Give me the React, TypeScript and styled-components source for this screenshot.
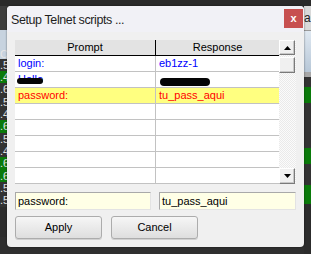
import styled, { createGlobalStyle } from 'styled-components';

const GlobalStyle = createGlobalStyle`
  html, body {
    margin: 0;
    padding: 0;
    background: #2d2d2d;
  }
  * {
    box-sizing: border-box;
  }
`;

const Desktop = styled.div`
  position: relative;
  width: 311px;
  height: 254px;
  overflow: hidden;
  display: flex;
  flex-direction: column;
  background: #2f2f2f;
  font-family: 'Liberation Sans', Arial, sans-serif;
`;

const TopBar = styled.div`
  height: 6px;
  flex-shrink: 0;
  background: #2a2a2a;
`;

const BackRow = styled.div`
  flex: 1;
  display: flex;
  justify-content: space-between;
`;

const Strip = styled.div<{ $width: number }>`
  width: ${({ $width }) => $width}px;
  display: flex;
  flex-direction: column;
  overflow: hidden;
`;

const Band = styled.div<{ $h: number; $bg: string }>`
  height: ${({ $h }) => $h}px;
  flex-shrink: 0;
  background: ${({ $bg }) => $bg};
  color: #e6e6e6;
  font-size: 11px;
  line-height: ${({ $h }) => $h}px;
  text-align: right;
  padding-right: 4px;
  white-space: nowrap;
`;

const RightBand = styled(Band)`
  text-align: left;
  padding: 0;
  color: #222;
  font-size: 12px;
`;

const Dialog = styled.div`
  position: absolute;
  left: 7px;
  top: 6px;
  width: 297px;
  height: 241px;
  background: #f0f0f0;
  border-radius: 4px;
  box-shadow: 0 0 2px rgba(0, 0, 0, 0.6);
  display: flex;
  flex-direction: column;
  overflow: hidden;
`;

const TitleBar = styled.div`
  height: 26px;
  flex-shrink: 0;
  display: flex;
  align-items: flex-start;
  justify-content: space-between;
  background: #f1f1f6;
  padding-left: 4px;
`;

const Title = styled.span`
  margin-top: 7px;
  font-size: 12.5px;
  letter-spacing: -0.4px;
  color: #1e1e1e;
`;

const CloseButton = styled.div`
  width: 19px;
  height: 19px;
  margin: 3px 1px 0 0;
  background: #c75050;
  color: #fff;
  font-size: 11px;
  font-weight: bold;
  display: flex;
  align-items: center;
  justify-content: center;
  padding-bottom: 2px;
`;

const Body = styled.div`
  flex: 1;
  padding: 8px 8px 7px;
  display: flex;
  flex-direction: column;
`;

const GridWrap = styled.div`
  display: flex;
  height: 144px;
  background: #fff;
`;

const Table = styled.div`
  flex: 1;
  display: flex;
  flex-direction: column;
`;

const Row = styled.div<{ $highlight?: boolean }>`
  height: 16px;
  display: grid;
  grid-template-columns: 140px 1px 1fr;
  border-bottom: 1px solid #c2c2c2;
  background: ${({ $highlight }) => ($highlight ? '#ffff80' : '#fff')};
`;

const HeaderRow = styled(Row)`
  background: #e3e3e3;
  border-bottom-color: #000;
`;

const Divider = styled.div<{ $dark?: boolean }>`
  background: ${({ $dark }) => ($dark ? '#000' : '#c2c2c2')};
`;

const HeaderCell = styled.div`
  font-size: 11px;
  line-height: 15px;
  text-align: center;
  color: #000;
`;

const Cell = styled.div<{ $color?: string }>`
  position: relative;
  font-size: 11px;
  line-height: 15px;
  padding-left: 3px;
  color: ${({ $color }) => $color ?? '#0000ff'};
  white-space: nowrap;
  overflow: hidden;
`;

const Scribble = styled.span<{ $w: number; $left: number; $h: number }>`
  position: absolute;
  left: ${({ $left }) => $left}px;
  top: 6px;
  width: ${({ $w }) => $w}px;
  height: ${({ $h }) => $h}px;
  background: #050505;
  border-radius: 4px;
`;

const ScrollBar = styled.div`
  width: 17px;
  display: flex;
  flex-direction: column;
  background-color: #f7f7f7;
  background-image: repeating-conic-gradient(#eaeaea 0 25%, #fbfbfb 0 50%);
  background-size: 2px 2px;
`;

const ScrollButton = styled.div<{ $h?: number }>`
  height: ${({ $h }) => $h ?? 16}px;
  width: 16px;
  background: #f0f0f0;
  border-top: 1px solid #fff;
  border-left: 1px solid #fff;
  border-right: 1px solid #7a7a7a;
  border-bottom: 1px solid #7a7a7a;
  box-shadow: inset -1px -1px 0 #c8c8c8;
  display: flex;
  align-items: center;
  justify-content: center;
`;

const Thumb = styled(ScrollButton)`
  margin-top: 2px;
`;

const Track = styled.div`
  flex: 1;
`;

const Inputs = styled.div`
  margin-top: 8px;
  display: grid;
  grid-template-columns: 136px 137px;
  column-gap: 8px;
`;

const Field = styled.div`
  height: 18px;
  background: #ffffe6;
  border-top: 1px solid #a9a9a9;
  border-left: 1px solid #a9a9a9;
  border-right: 1px solid #e3e3e3;
  border-bottom: 1px solid #e3e3e3;
  font-size: 11px;
  line-height: 16px;
  padding-left: 2px;
  color: #000;
`;

const Buttons = styled.div`
  margin-top: 6px;
  display: flex;
  gap: 9px;
`;

const Button = styled.div`
  width: 87px;
  height: 23px;
  border: 1px solid #acacac;
  border-radius: 3px;
  background: linear-gradient(#f6f6f6, #dedede);
  box-shadow: 0 1px 0 #d0d0d0;
  font-size: 11px;
  line-height: 21px;
  text-align: center;
  color: #000;
`;

const Arrow = ({ down }: { down?: boolean }) => (
  <svg width="7" height="4" viewBox="0 0 7 4">
    <path d={down ? 'M0 0h7L3.5 4z' : 'M3.5 0L7 4H0z'} fill="#000" />
  </svg>
);

const leftBands: { h: number; bg: string; text?: string }[] = [
  { h: 24, bg: '#3c3c3c' },
  { h: 20, bg: '#c7d3df' },
  { h: 9, bg: '#c7d3df', text: 'C(' },
  { h: 12, bg: '#333', text: '.5' },
  { h: 12, bg: '#0a7a0a', text: '.4' },
  { h: 13, bg: '#333', text: '.6' },
  { h: 12, bg: '#333', text: '.5' },
  { h: 12, bg: '#333', text: '.4' },
  { h: 13, bg: '#0a7a0a', text: '.6' },
  { h: 12, bg: '#333', text: '.5' },
  { h: 12, bg: '#333', text: '.4' },
  { h: 13, bg: '#0a7a0a', text: '.6' },
  { h: 12, bg: '#0a7a0a', text: '.6' },
  { h: 12, bg: '#333', text: '.5' },
  { h: 13, bg: '#333', text: '.5' },
  { h: 30, bg: '#2c2c2c' },
];

const rightBands: { h: number; bg: string; text?: string }[] = [
  { h: 24, bg: '#d9d9d9', text: 'a' },
  { h: 1, bg: '#9a9a9a' },
  { h: 41, bg: 'linear-gradient(#dfe8f1, #b7c7d7)' },
  { h: 5, bg: '#a8a8a8' },
  { h: 10, bg: '#333' },
  { h: 16, bg: '#0a7a0a' },
  { h: 45, bg: '#333' },
  { h: 16, bg: '#0a7a0a' },
  { h: 21, bg: '#333' },
  { h: 19, bg: '#0a7a0a' },
  { h: 60, bg: '#2c2c2c' },
];

const rows = [
  { prompt: 'login:', response: 'eb1zz-1' },
  { prompt: 'Hello', response: '', hidden: true },
  { prompt: 'password:', response: 'tu_pass_aqui', highlight: true },
  {}, {}, {}, {}, {},
] as { prompt?: string; response?: string; hidden?: boolean; highlight?: boolean }[];

export default function App() {
  return (
    <>
      <GlobalStyle />
      <Desktop>
        <TopBar />
        <BackRow>
          <Strip $width={12}>
            {leftBands.map((b, i) => (
              <Band key={i} $h={b.h} $bg={b.bg}>{b.text}</Band>
            ))}
          </Strip>
          <Strip $width={7}>
            {rightBands.map((b, i) => (
              <RightBand key={i} $h={b.h} $bg={b.bg}>{b.text}</RightBand>
            ))}
          </Strip>
        </BackRow>

        <Dialog>
          <TitleBar>
            <Title>Setup Telnet scripts ...</Title>
            <CloseButton>x</CloseButton>
          </TitleBar>
          <Body>
            <GridWrap>
              <Table>
                <HeaderRow>
                  <HeaderCell>Prompt</HeaderCell>
                  <Divider $dark />
                  <HeaderCell>Response</HeaderCell>
                </HeaderRow>
                {rows.map((r, i) => {
                  const color = r.highlight ? '#ff0000' : '#0000ff';
                  return (
                    <Row key={i} $highlight={r.highlight}>
                      <Cell $color={color}>
                        {r.prompt}
                        {r.hidden && <Scribble $left={2} $w={26} $h={6} />}
                      </Cell>
                      <Divider />
                      <Cell $color={color}>
                        {r.response}
                        {r.hidden && <Scribble $left={4} $w={50} $h={8} />}
                      </Cell>
                    </Row>
                  );
                })}
              </Table>
              <ScrollBar>
                <ScrollButton $h={15}><Arrow /></ScrollButton>
                <Thumb />
                <Track />
                <ScrollButton><Arrow down /></ScrollButton>
              </ScrollBar>
            </GridWrap>
            <Inputs>
              <Field>password:</Field>
              <Field>tu_pass_aqui</Field>
            </Inputs>
            <Buttons>
              <Button>Apply</Button>
              <Button>Cancel</Button>
            </Buttons>
          </Body>
        </Dialog>
      </Desktop>
    </>
  );
}
